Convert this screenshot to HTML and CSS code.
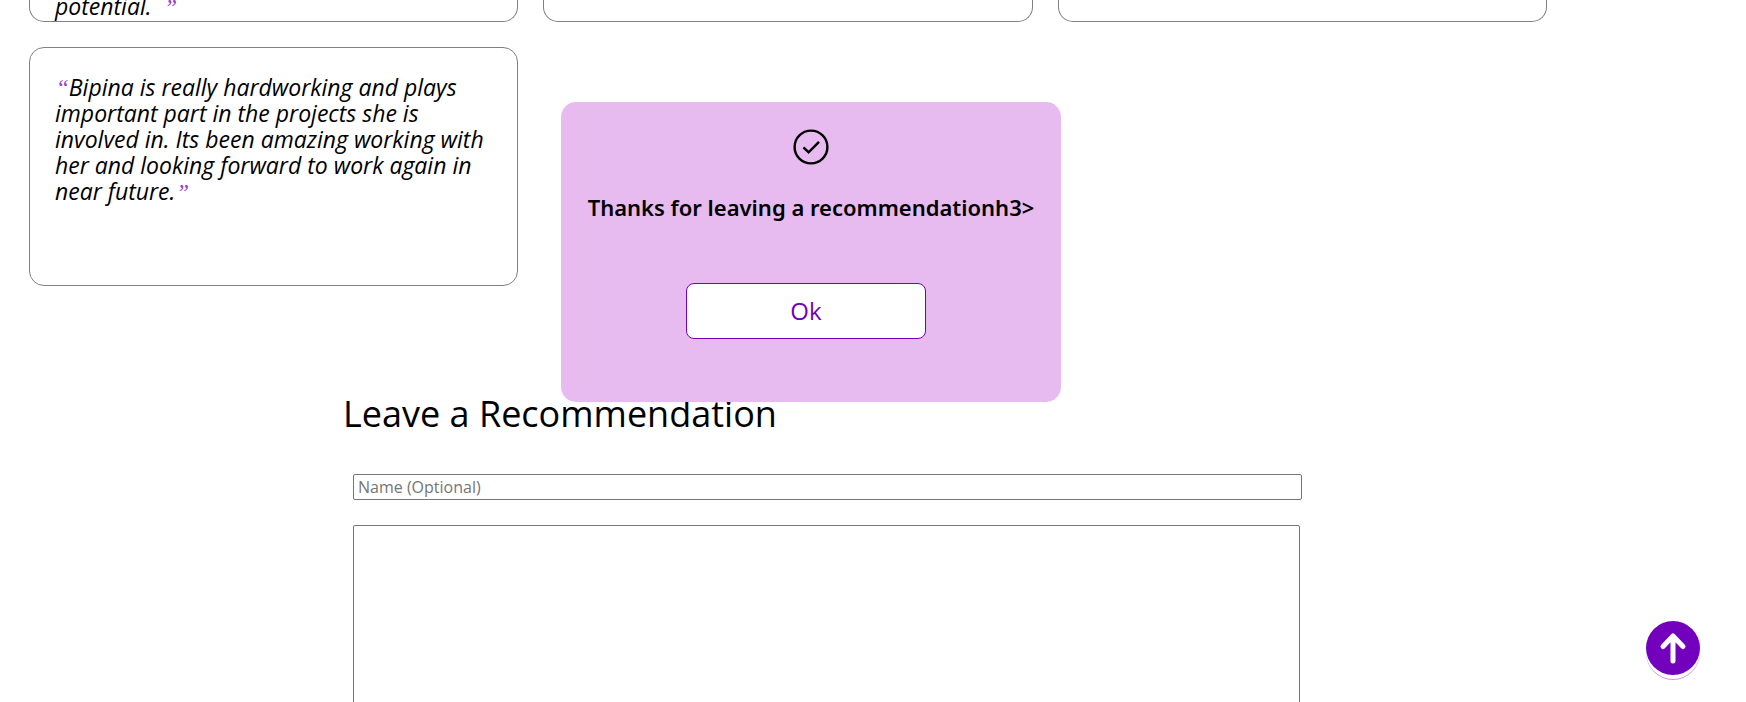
FILE: index.html
```
<!DOCTYPE html>
<html lang="en">
<head>
<meta charset="utf-8">
<title>Recommendations</title>
<link rel="stylesheet" href="styles.css">
</head>
<body>
<main class="page">
  <section class="recommendations">
    <article class="card card-cut"><p class="quote">potential. <span class="mark">&nbsp;”</span></p></article>
    <article class="card card-cut"></article>
    <article class="card card-cut"></article>
    <article class="card"><p class="quote"><span class="mark">“</span>Bipina is really hardworking and plays important part in the projects she is involved in. Its been amazing working with her and looking forward to work again in near future.<span class="mark">”</span></p></article>
  </section>
  <form class="form">
    <h2 class="form-title">Leave a Recommendation</h2>
    <input class="name" type="text" placeholder="Name (Optional)" aria-label="Name (Optional)">
    <textarea class="message" aria-label="Recommendation"></textarea>
  </form>
</main>
<div class="popup" role="dialog" aria-labelledby="popup-title">
  <svg class="check" viewBox="0 0 36 36" fill="none" stroke="currentColor" aria-hidden="true">
    <circle cx="18" cy="18" r="16.4" stroke-width="2.4"/>
    <path d="M10.5 18.3 L15.6 23.3 L26 12.8" stroke-width="2.5"/>
  </svg>
  <h3 class="popup-title" id="popup-title">Thanks for leaving a recommendationh3&gt;</h3>
  <button class="ok" type="button">Ok</button>
</div>
<a class="to-top" href="#" aria-label="Back to top">
  <svg class="arrow" viewBox="0 0 54 54" fill="none" stroke="currentColor" stroke-width="5" stroke-linecap="round" stroke-linejoin="round" aria-hidden="true">
    <path d="M27 40 V15 M17 25.5 L27 15 L37 25.5"/>
  </svg>
</a>
</body>
</html>
```
FILE: styles.css
```
* {
  box-sizing: border-box;
}

body {
  margin: 0;
  background: #fff;
  color: #000;
  font-family: "Trebuchet MS", "Open Sans", sans-serif;
  height: 100vh;
  overflow: hidden;
}

.recommendations {
  display: grid;
  grid-template-columns: repeat(3, 1fr);
  gap: 25px;
  margin: 0 199px 0 29px;
}

.card {
  min-height: 239px;
  padding: 26px 20px 25px 25px;
  border: 1px solid #808080;
  border-radius: 15px;
}

.card-cut {
  min-height: 22px;
  padding: 0 25px;
  border-top: 0;
  border-radius: 0 0 15px 15px;
}

.card-cut .quote {
  margin-top: -7px;
  height: 26px;
}

.quote {
  margin: 0;
  font-size: 23px;
  font-style: italic;
  line-height: 26px;
}

.mark {
  margin-left: 1px;
  color: #9440cc;
  font-family: "Liberation Serif", serif;
  line-height: 1;
}

.form {
  display: flex;
  flex-direction: column;
  margin: 104px 444px 0 343px;
}

.form-title {
  margin: 0;
  font-size: 36px;
  font-weight: 400;
  line-height: 48px;
}

.name,
.message {
  margin: 0 0 0 10px;
  padding: 2px 4px;
  border: 1px solid #767676;
  border-radius: 2px;
  font: 16px/20px "Trebuchet MS", "Open Sans", sans-serif;
}

.name {
  height: 26px;
  margin-top: 36px;
}

.name::placeholder {
  color: #757575;
}

.message {
  height: 250px;
  margin-top: 25px;
  margin-right: 2px;
  resize: none;
}

.popup {
  position: fixed;
  top: 102px;
  left: calc(50% - 312px);
  display: flex;
  flex-direction: column;
  align-items: center;
  width: 500px;
  min-height: 300px;
  padding-top: 27px;
  border-radius: 15px;
  background: #e8bbf0;
}

.check {
  width: 36px;
  height: 36px;
}

.popup-title {
  margin: 26px 0 0;
  font-family: "Trebuchet MS", "Noto Sans", sans-serif;
  font-size: 22px;
  font-weight: 600;
  line-height: 32px;
  white-space: nowrap;
}

.ok {
  width: 240px;
  height: 56px;
  margin: 60px 10px 0 0;
  padding: 0 0 2px;
  border: 1px solid #7300bc;
  border-radius: 8px;
  background: #fff;
  color: #7300bc;
  font: 24px "Trebuchet MS", "Open Sans", sans-serif;
}

.to-top {
  position: fixed;
  right: 46px;
  bottom: 27px;
  width: 54px;
  height: 54px;
  border-radius: 50%;
  background: #7300bc;
  color: #fff;
  box-shadow: 0 4px 0 #fff, 0 5px 0 #c79be3;
}

.arrow {
  display: block;
}
```
